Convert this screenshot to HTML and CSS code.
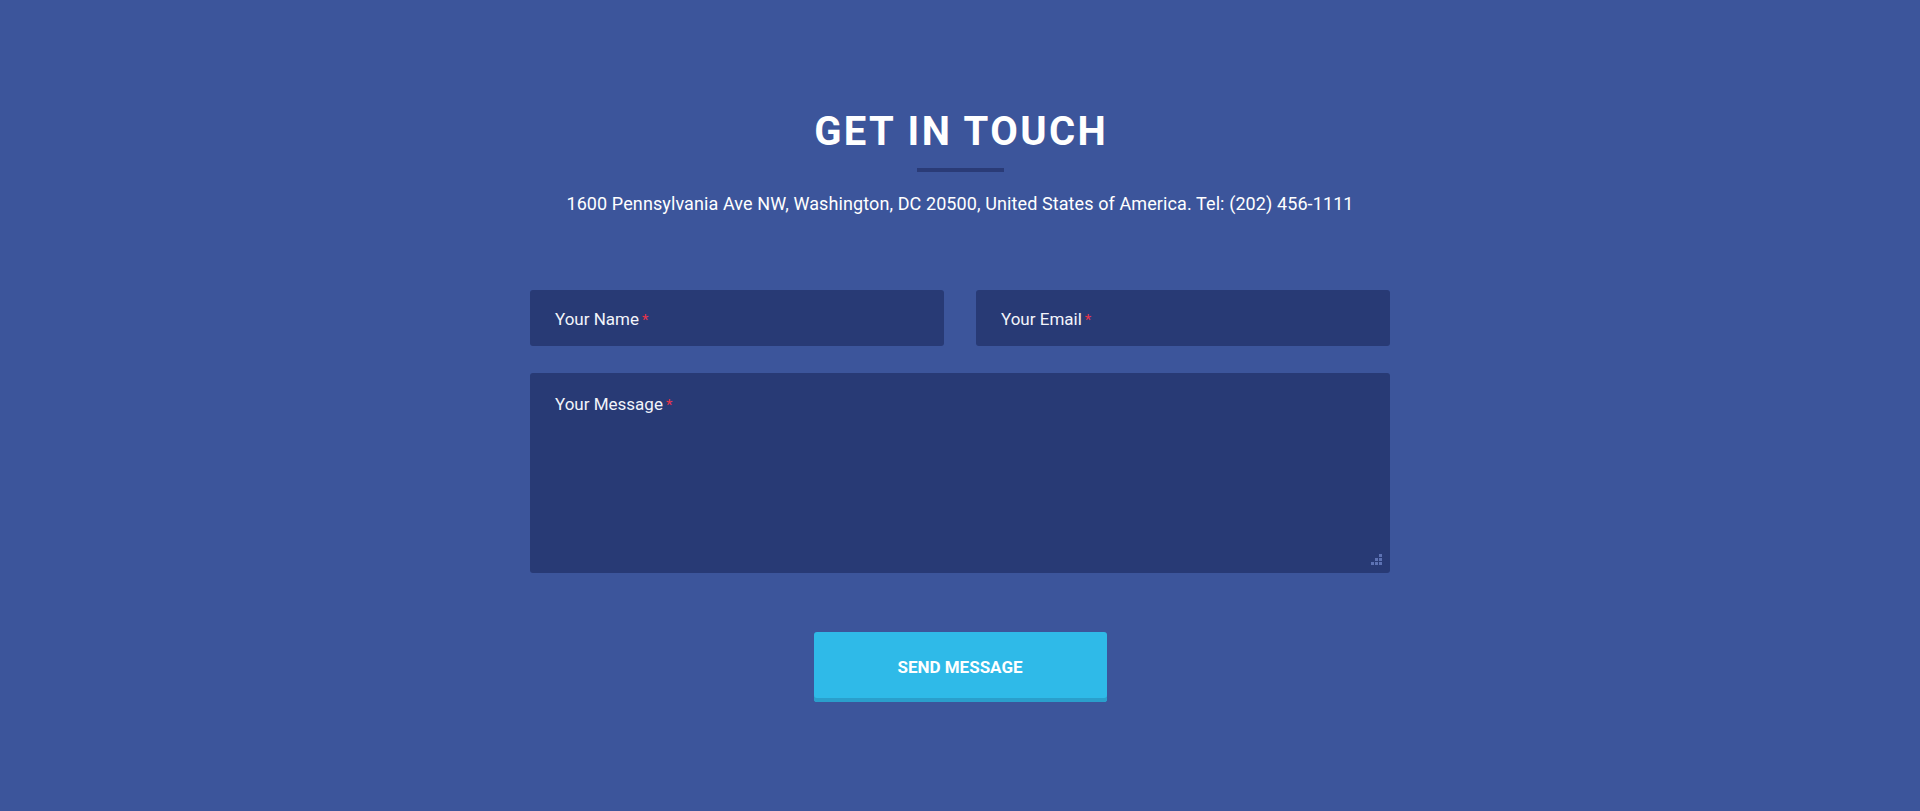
FILE: index.html
```html
<!DOCTYPE html>
<html lang="en">
<head>
<meta charset="utf-8">
<title>Get in touch</title>
<link rel="stylesheet" href="styles.css">
</head>
<body>
<section class="contact">
  <h1 class="contact-title">GET IN TOUCH</h1>
  <div class="contact-rule"></div>
  <p class="contact-address">1600 Pennsylvania Ave NW, Washington, DC 20500, United States of America. Tel: (202) 456-1111</p>
  <form class="contact-form">
    <div class="form-row">
      <label class="field field-input"><span class="field-label">Your Name<span class="req">*</span></span></label>
      <label class="field field-input"><span class="field-label">Your Email<span class="req">*</span></span></label>
    </div>
    <label class="field field-textarea"><span class="field-label">Your Message<span class="req">*</span></span>
      <span class="grip">
        <i></i><i></i><i></i><i></i><i></i><i></i><i></i><i></i><i></i>
      </span>
    </label>
    <div class="form-actions">
      <button type="button" class="send-btn">SEND MESSAGE</button>
    </div>
  </form>
</section>
</body>
</html>
```
FILE: styles.css
```css
html, body {
  margin: 0;
  padding: 0;
}
body {
  background: #3c559b;
  font-family: Roboto, "Open Sans", sans-serif;
  color: #fff;
  height: 811px;
  overflow: hidden;
}
.contact {
  display: flex;
  flex-direction: column;
  align-items: center;
  padding-top: 108px;
}
.contact-title {
  margin: 0;
  font-size: 40px;
  line-height: 48px;
  font-weight: 700;
  letter-spacing: 0.06em;
  padding-left: 0.06em;
}
.contact-rule {
  width: 87px;
  height: 4px;
  background: #2a3b77;
  margin-top: 12px;
}
.contact-address {
  margin: 20px 0 0;
  font-size: 18px;
  line-height: 24px;
  letter-spacing: 0.1px;
}
.contact-form {
  width: 860px;
  margin-top: 74px;
  display: flex;
  flex-direction: column;
  gap: 27px;
}
.form-row {
  display: flex;
  gap: 32px;
}
.field {
  background: #283a75;
  border-radius: 3px;
  box-sizing: border-box;
  display: block;
  position: relative;
}
.field-input {
  flex: 1;
  height: 56px;
  padding: 16px 25px 14px;
}
.field-textarea {
  height: 200px;
  padding: 18px 25px;
}
.field-label {
  font-size: 17px;
  line-height: 26px;
  color: #f2f4fa;
}
.req {
  color: #e8344a;
  margin-left: 3px;
  font-size: 15px;
}
.grip {
  position: absolute;
  right: 8px;
  bottom: 8px;
  width: 11px;
  height: 11px;
  display: grid;
  grid-template-columns: repeat(3, 3px);
  grid-template-rows: repeat(3, 3px);
  gap: 1px;
}
.grip i {
  background: #5d72b3;
}
.grip i:nth-child(1), .grip i:nth-child(2), .grip i:nth-child(4) {
  background: transparent;
}
.form-actions {
  display: flex;
  justify-content: center;
  margin-top: 32px;
}
.send-btn {
  width: 293px;
  height: 70px;
  border: none;
  border-radius: 3px;
  background: #2fbae8;
  box-shadow: inset 0 -4px 0 #2a9fcc;
  color: #fff;
  font-family: Roboto, "Open Sans", sans-serif;
  font-size: 17px;
  font-weight: 700;
  padding: 0;
  cursor: pointer;
}
```
